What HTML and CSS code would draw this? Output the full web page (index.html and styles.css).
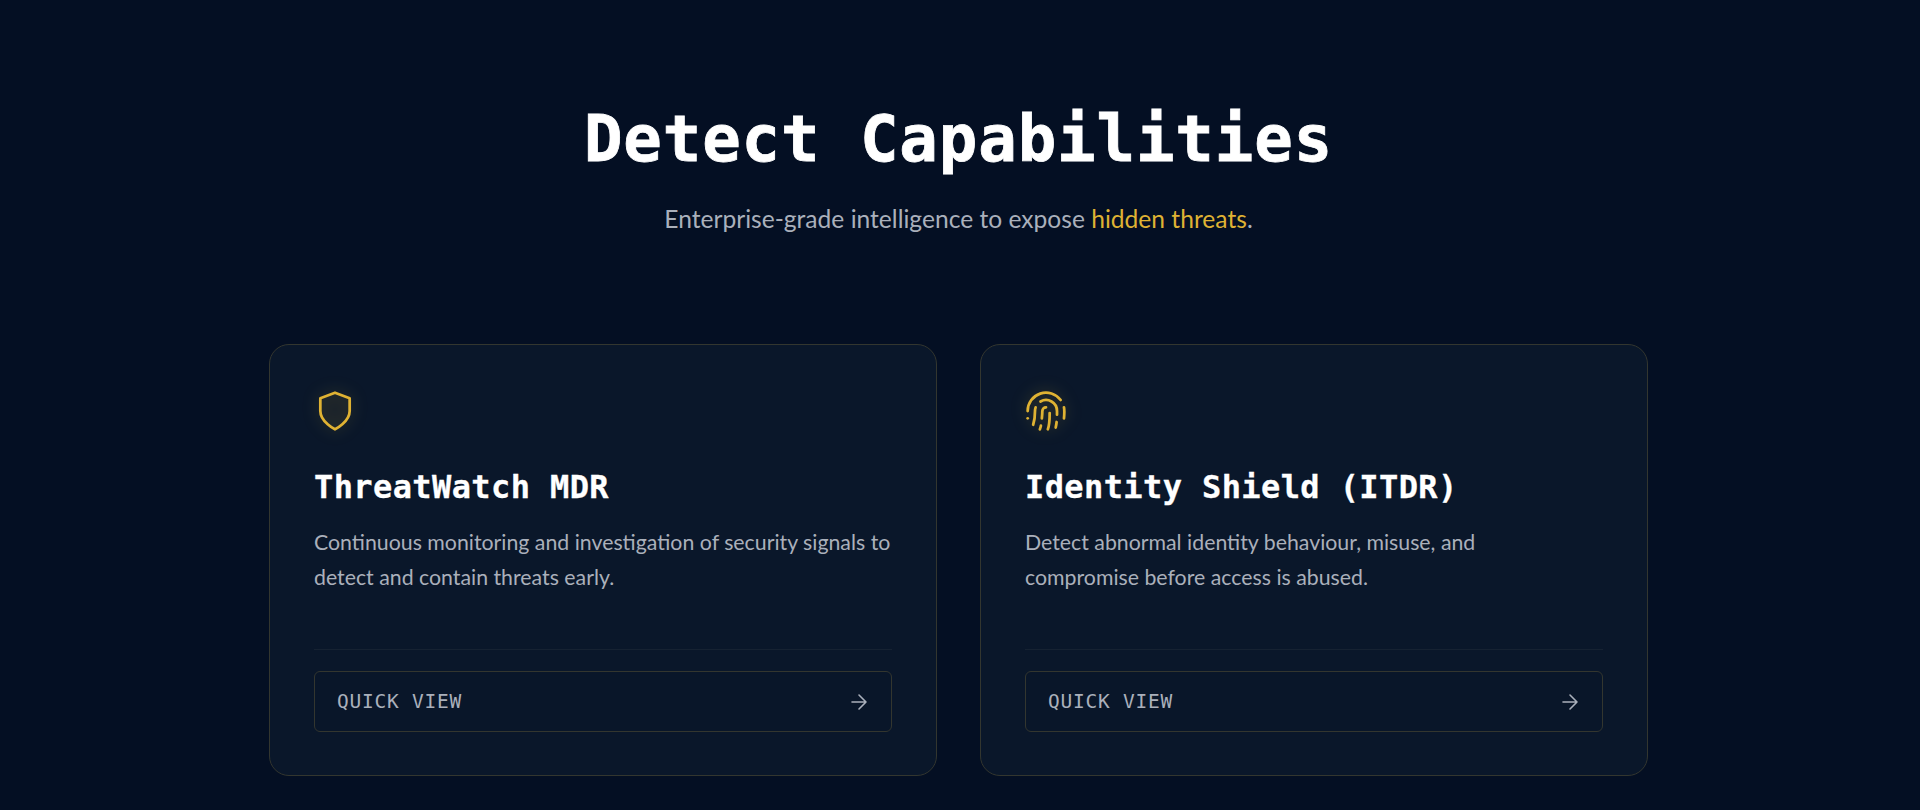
FILE: index.html
```html
<!DOCTYPE html>
<html lang="en">
<head>
    <meta charset="UTF-8">
    <meta name="viewport" content="width=device-width, initial-scale=1.0">
    <title>Detect Capabilities</title>
    <link rel="stylesheet" href="styles.css">
</head>
<body>
    <section class="section">
        <header class="section-head">
            <h1>Detect Capabilities</h1>
            <p>Enterprise-grade intelligence to expose <span class="accent">hidden threats</span>.</p>
        </header>

        <div class="cards">
            <article class="card">
                <svg class="card-icon" viewBox="0 0 24 24">
                    <path class="shield-fill" d="M12 22s8-4 8-10V5l-8-3-8 3v7c0 6 8 10 8 10z"/>
                </svg>
                <h2>ThreatWatch MDR</h2>
                <p>Continuous monitoring and investigation of security signals to detect and contain threats early.</p>
                <button class="quick-view">
                    <span>QUICK VIEW</span>
                    <svg viewBox="0 0 24 24"><path d="M5 12h14M12 5l7 7-7 7"/></svg>
                </button>
            </article>

            <article class="card">
                <svg class="card-icon" viewBox="0 0 24 24">
                    <path d="M12 10a2 2 0 0 0-2 2c0 1.02-.1 2.51-.26 4"/>
                    <path d="M14 13.12c0 2.38 0 6.38-1 8.88"/>
                    <path d="M17.29 21.02c.12-.6.43-2.3.5-3.02"/>
                    <path d="M2 12a10 10 0 0 1 18-6"/>
                    <path d="M2 16h.01"/>
                    <path d="M21.8 16c.2-2 .131-5.354 0-6"/>
                    <path d="M5 19.5C5.5 18 6 15 6 12a6 6 0 0 1 .34-2"/>
                    <path d="M8.65 22c.21-.66.45-1.32.57-2"/>
                    <path d="M9 6.8a6 6 0 0 1 9 5.2v2"/>
                </svg>
                <h2>Identity Shield (ITDR)</h2>
                <p>Detect abnormal identity behaviour, misuse, and<br>compromise before access is abused.</p>
                <button class="quick-view">
                    <span>QUICK VIEW</span>
                    <svg viewBox="0 0 24 24"><path d="M5 12h14M12 5l7 7-7 7"/></svg>
                </button>
            </article>
        </div>
    </section>
</body>
</html>
```

FILE: styles.css
```css
html, body {
    height: 100%;
}
body {
    margin: 0;
    background-color: #040f23;
    color: #fff;
    font-family: 'Lato', sans-serif;
    overflow: hidden;
}
.section {
    padding: 99px 272px 0 269px;
}
.section-head {
    text-align: center;
    margin-bottom: 108px;
}
h1 {
    margin: 0;
    font-family: 'DejaVu Sans Mono', monospace;
    font-size: 64px;
    line-height: 80px;
    font-weight: 700;
    letter-spacing: 0.9px;
    -webkit-text-stroke: 0.8px #fff;
}
.section-head p {
    margin: 23px 0 0;
    font-size: 24.6px;
    line-height: 34px;
    font-weight: 400;
    color: #aab0bb;
}
.accent {
    color: #dfb233;
}
.cards {
    display: grid;
    grid-template-columns: 1fr 1fr;
    gap: 43px;
}
.card {
    display: flex;
    flex-direction: column;
    box-sizing: border-box;
    height: 432px;
    padding: 44px 44px 43px;
    background-color: #0a172a;
    border: 1px solid #33362f;
    border-radius: 20px;
}
.card-icon {
    width: 44px;
    height: 44px;
    margin-left: -1px;
    fill: none;
    stroke: #dfb233;
    stroke-width: 1.5;
    stroke-linecap: round;
    stroke-linejoin: round;
    filter: drop-shadow(0 0 8px rgba(223, 178, 51, 0.3));
}
.shield-fill {
    fill: rgba(223, 178, 51, 0.05);
}
.card h2 {
    margin: 32px 0 0;
    font-family: 'DejaVu Sans Mono', monospace;
    font-size: 32px;
    line-height: 44px;
    font-weight: 700;
    letter-spacing: 0.4px;
    -webkit-text-stroke: 0.3px #fff;
}
.card p {
    margin: 16px 0 0;
    font-size: 21.3px;
    line-height: 35px;
    font-weight: 400;
    color: #aab0bb;
}
.quick-view {
    display: flex;
    justify-content: space-between;
    align-items: center;
    margin-top: auto;
    height: 61px;
    padding: 0 20px 0 22px;
    background-color: #091629;
    border: 1px solid #33362f;
    border-radius: 6px;
    color: #aab0bb;
    font-family: 'DejaVu Sans Mono', monospace;
    font-size: 19.5px;
    letter-spacing: 0.75px;
    position: relative;
}
.quick-view::before {
    content: "";
    position: absolute;
    left: -1px;
    right: -1px;
    top: -23px;
    height: 1px;
    background-color: #162232;
}
.quick-view svg {
    width: 24px;
    height: 24px;
    fill: none;
    stroke: #aab0bb;
    stroke-width: 1.6;
    stroke-linecap: round;
    stroke-linejoin: round;
}
```
